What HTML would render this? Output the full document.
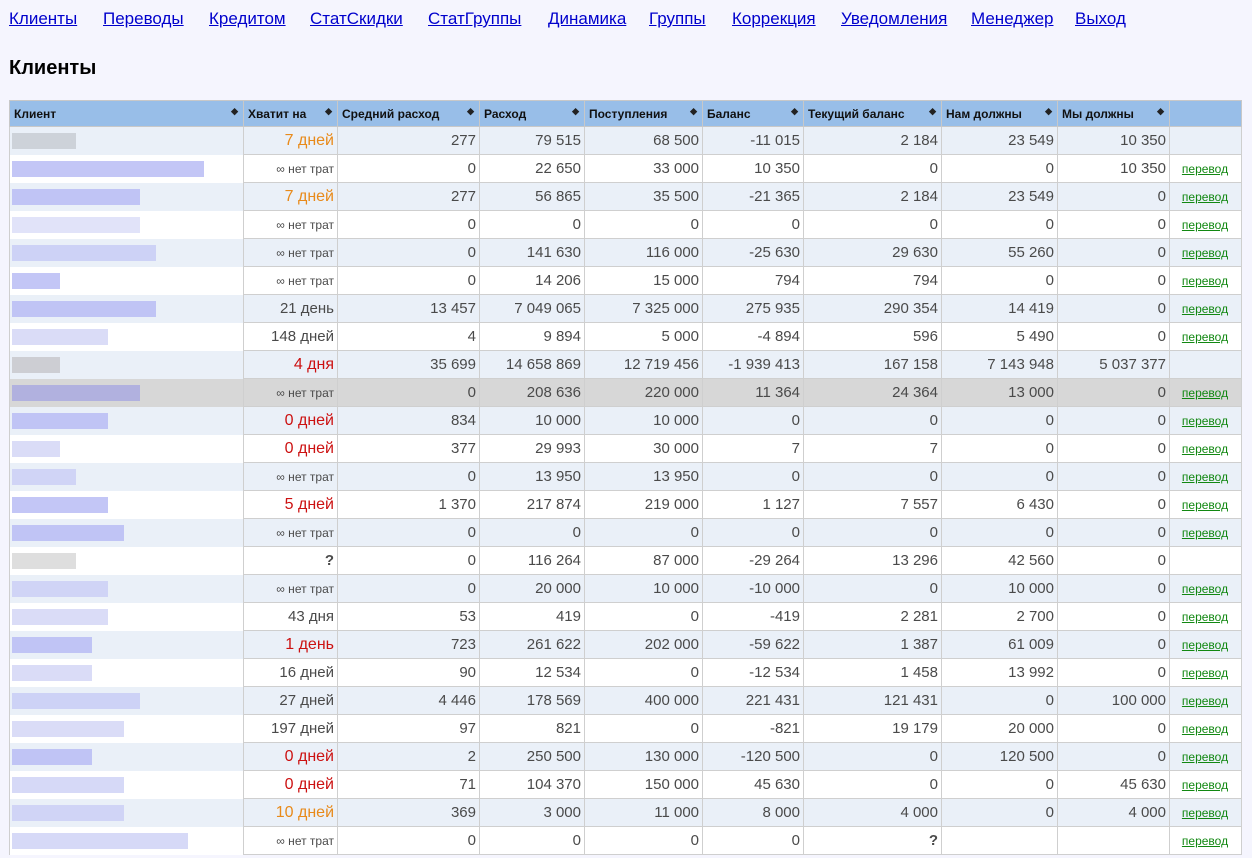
<!DOCTYPE html>
<html><head><meta charset="utf-8"><style>
body{margin:0;background:#f5f5fe;font-family:"Liberation Sans",Arial,sans-serif;width:1252px;height:858px;overflow:hidden;position:relative}
.nav a{position:absolute;top:9px;font-size:17px;color:#0000cc;text-decoration:underline}
h1{position:absolute;left:9px;top:57px;margin:0;font-size:20px;font-weight:bold;color:#000}
table{position:absolute;left:9px;top:100px;border-collapse:collapse;width:1232px;table-layout:fixed;color:#4a4a4a;font-size:15px}
th{background:#98bee8;height:25px;font-size:12px;color:#111;text-align:left;padding:0 4px;border:1px solid #c8c8c8;position:relative;font-weight:bold}
th span{position:absolute;right:5px;top:5px;font-size:9px;color:#222}
td{height:27px;border:1px solid #cfcfcf;text-align:right;padding:0 3px 0 2px;white-space:nowrap}
tr.a td{background:#eaf0f8}
tr.b td{background:#fff}
tr.g td{background:#d7d7d7}
td.c{border-top:none;border-bottom:none;padding:0}
td.c div{height:16px;background:#b8bcf4;margin-left:2px;opacity:.85}
.o{color:#e88a1a;font-size:16px}.r{color:#cc1111;font-size:16px}
.n{font-size:12px}
.q{font-weight:bold}
td.l{text-align:center;font-size:12px}
td.l a{color:#118811;text-decoration:underline}
</style></head><body>
<div class="nav">
<a style="left:9px">Клиенты</a><a style="left:103px">Переводы</a><a style="left:209px">Кредитом</a><a style="left:310px">СтатСкидки</a><a style="left:428px">СтатГруппы</a><a style="left:548px">Динамика</a><a style="left:649px">Группы</a><a style="left:732px">Коррекция</a><a style="left:841px">Уведомления</a><a style="left:971px">Менеджер</a><a style="left:1075px">Выход</a>
</div>
<h1>Клиенты</h1>
<table>
<colgroup><col style="width:234px"><col style="width:94px"><col style="width:142px"><col style="width:105px"><col style="width:118px"><col style="width:101px"><col style="width:138px"><col style="width:116px"><col style="width:112px"><col style="width:72px"></colgroup>
<tr><th>Клиент<span>◆</span></th><th>Хватит на<span>◆</span></th><th>Средний расход<span>◆</span></th><th>Расход<span>◆</span></th><th>Поступления<span>◆</span></th><th>Баланс<span>◆</span></th><th>Текущий баланс<span>◆</span></th><th>Нам должны<span>◆</span></th><th>Мы должны<span>◆</span></th><th></th></tr>
<tr class="a"><td class="c"><div style="width:64px;background:#c8ccd4"></div></td><td class="o">7 дней</td><td>277</td><td>79 515</td><td>68 500</td><td>-11 015</td><td>2 184</td><td>23 549</td><td>10 350</td><td class="l"></td></tr>
<tr class="b"><td class="c"><div style="width:192px"></div></td><td class="n">∞ нет трат</td><td>0</td><td>22 650</td><td>33 000</td><td>10 350</td><td>0</td><td>0</td><td>10 350</td><td class="l"><a>перевод</a></td></tr>
<tr class="a"><td class="c"><div style="width:128px"></div></td><td class="o">7 дней</td><td>277</td><td>56 865</td><td>35 500</td><td>-21 365</td><td>2 184</td><td>23 549</td><td>0</td><td class="l"><a>перевод</a></td></tr>
<tr class="b"><td class="c"><div style="width:128px;background:#dcdef8"></div></td><td class="n">∞ нет трат</td><td>0</td><td>0</td><td>0</td><td>0</td><td>0</td><td>0</td><td>0</td><td class="l"><a>перевод</a></td></tr>
<tr class="a"><td class="c"><div style="width:144px;background:#c8ccf6"></div></td><td class="n">∞ нет трат</td><td>0</td><td>141 630</td><td>116 000</td><td>-25 630</td><td>29 630</td><td>55 260</td><td>0</td><td class="l"><a>перевод</a></td></tr>
<tr class="b"><td class="c"><div style="width:48px"></div></td><td class="n">∞ нет трат</td><td>0</td><td>14 206</td><td>15 000</td><td>794</td><td>794</td><td>0</td><td>0</td><td class="l"><a>перевод</a></td></tr>
<tr class="a"><td class="c"><div style="width:144px"></div></td><td>21 день</td><td>13 457</td><td>7 049 065</td><td>7 325 000</td><td>275 935</td><td>290 354</td><td>14 419</td><td>0</td><td class="l"><a>перевод</a></td></tr>
<tr class="b"><td class="c"><div style="width:96px;background:#d4d6f6"></div></td><td>148 дней</td><td>4</td><td>9 894</td><td>5 000</td><td>-4 894</td><td>596</td><td>5 490</td><td>0</td><td class="l"><a>перевод</a></td></tr>
<tr class="a"><td class="c"><div style="width:48px;background:#c8c8cc"></div></td><td class="r">4 дня</td><td>35 699</td><td>14 658 869</td><td>12 719 456</td><td>-1 939 413</td><td>167 158</td><td>7 143 948</td><td>5 037 377</td><td class="l"></td></tr>
<tr class="g"><td class="c"><div style="width:128px;background:#aaaae0"></div></td><td class="n">∞ нет трат</td><td>0</td><td>208 636</td><td>220 000</td><td>11 364</td><td>24 364</td><td>13 000</td><td>0</td><td class="l"><a>перевод</a></td></tr>
<tr class="a"><td class="c"><div style="width:96px"></div></td><td class="r">0 дней</td><td>834</td><td>10 000</td><td>10 000</td><td>0</td><td>0</td><td>0</td><td>0</td><td class="l"><a>перевод</a></td></tr>
<tr class="b"><td class="c"><div style="width:48px;background:#d4d6f6"></div></td><td class="r">0 дней</td><td>377</td><td>29 993</td><td>30 000</td><td>7</td><td>7</td><td>0</td><td>0</td><td class="l"><a>перевод</a></td></tr>
<tr class="a"><td class="c"><div style="width:64px;background:#cbcff6"></div></td><td class="n">∞ нет трат</td><td>0</td><td>13 950</td><td>13 950</td><td>0</td><td>0</td><td>0</td><td>0</td><td class="l"><a>перевод</a></td></tr>
<tr class="b"><td class="c"><div style="width:96px"></div></td><td class="r">5 дней</td><td>1 370</td><td>217 874</td><td>219 000</td><td>1 127</td><td>7 557</td><td>6 430</td><td>0</td><td class="l"><a>перевод</a></td></tr>
<tr class="a"><td class="c"><div style="width:112px"></div></td><td class="n">∞ нет трат</td><td>0</td><td>0</td><td>0</td><td>0</td><td>0</td><td>0</td><td>0</td><td class="l"><a>перевод</a></td></tr>
<tr class="b"><td class="c"><div style="width:64px;background:#d8d8d8"></div></td><td class="q">?</td><td>0</td><td>116 264</td><td>87 000</td><td>-29 264</td><td>13 296</td><td>42 560</td><td>0</td><td class="l"></td></tr>
<tr class="a"><td class="c"><div style="width:96px;background:#cbcff6"></div></td><td class="n">∞ нет трат</td><td>0</td><td>20 000</td><td>10 000</td><td>-10 000</td><td>0</td><td>10 000</td><td>0</td><td class="l"><a>перевод</a></td></tr>
<tr class="b"><td class="c"><div style="width:96px;background:#d4d6f6"></div></td><td>43 дня</td><td>53</td><td>419</td><td>0</td><td>-419</td><td>2 281</td><td>2 700</td><td>0</td><td class="l"><a>перевод</a></td></tr>
<tr class="a"><td class="c"><div style="width:80px"></div></td><td class="r">1 день</td><td>723</td><td>261 622</td><td>202 000</td><td>-59 622</td><td>1 387</td><td>61 009</td><td>0</td><td class="l"><a>перевод</a></td></tr>
<tr class="b"><td class="c"><div style="width:80px;background:#d4d6f6"></div></td><td>16 дней</td><td>90</td><td>12 534</td><td>0</td><td>-12 534</td><td>1 458</td><td>13 992</td><td>0</td><td class="l"><a>перевод</a></td></tr>
<tr class="a"><td class="c"><div style="width:128px;background:#c8ccf6"></div></td><td>27 дней</td><td>4 446</td><td>178 569</td><td>400 000</td><td>221 431</td><td>121 431</td><td>0</td><td>100 000</td><td class="l"><a>перевод</a></td></tr>
<tr class="b"><td class="c"><div style="width:112px;background:#d4d6f6"></div></td><td>197 дней</td><td>97</td><td>821</td><td>0</td><td>-821</td><td>19 179</td><td>20 000</td><td>0</td><td class="l"><a>перевод</a></td></tr>
<tr class="a"><td class="c"><div style="width:80px"></div></td><td class="r">0 дней</td><td>2</td><td>250 500</td><td>130 000</td><td>-120 500</td><td>0</td><td>120 500</td><td>0</td><td class="l"><a>перевод</a></td></tr>
<tr class="b"><td class="c"><div style="width:112px;background:#cfd2f6"></div></td><td class="r">0 дней</td><td>71</td><td>104 370</td><td>150 000</td><td>45 630</td><td>0</td><td>0</td><td>45 630</td><td class="l"><a>перевод</a></td></tr>
<tr class="a"><td class="c"><div style="width:112px;background:#cbcff6"></div></td><td class="o">10 дней</td><td>369</td><td>3 000</td><td>11 000</td><td>8 000</td><td>4 000</td><td>0</td><td>4 000</td><td class="l"><a>перевод</a></td></tr>
<tr class="b"><td class="c"><div style="width:176px;background:#cfd2f6"></div></td><td class="n">∞ нет трат</td><td>0</td><td>0</td><td>0</td><td>0</td><td class="q">?</td><td></td><td></td><td class="l"><a>перевод</a></td></tr>
</table>
</body></html>
